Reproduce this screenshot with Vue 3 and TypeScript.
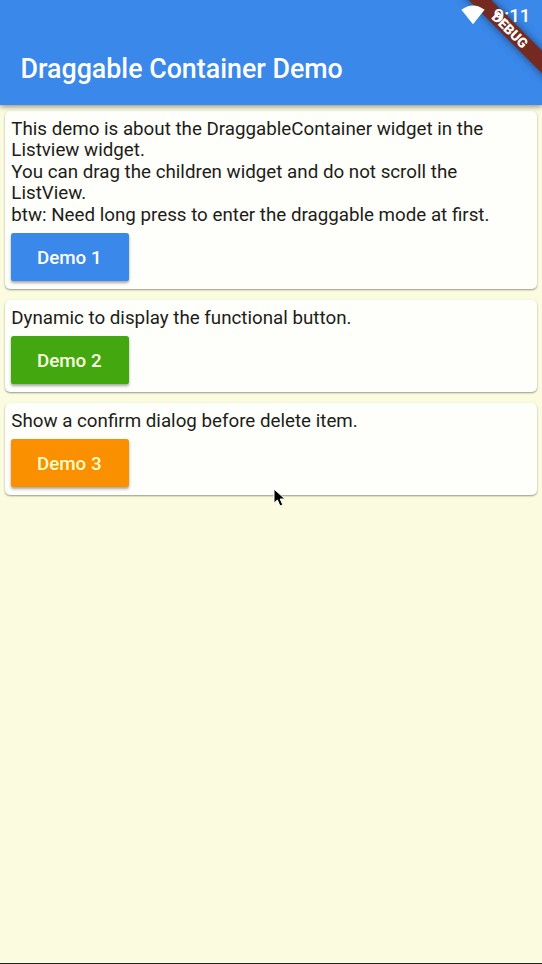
<script setup lang="ts">
interface Demo {
  lines: string[]
  label: string
  tone: string
}

const demos: Demo[] = [
  {
    lines: [
      'This demo is about the DraggableContainer widget in the Listview widget.',
      'You can drag the children widget and do not scroll the ListView.',
      'btw: Need long press to enter the draggable mode at first.',
    ],
    label: 'Demo 1',
    tone: 'blue',
  },
  { lines: ['Dynamic to display the functional button.'], label: 'Demo 2', tone: 'green' },
  { lines: ['Show a confirm dialog before delete item.'], label: 'Demo 3', tone: 'orange' },
]
</script>

<template>
  <div class="screen">
    <header class="app-bar">
      <h1>Draggable Container Demo</h1>
    </header>
    <main class="list">
      <section v-for="demo in demos" :key="demo.label" class="card">
        <p v-for="line in demo.lines" :key="line">{{ line }}</p>
        <button type="button" :class="demo.tone">{{ demo.label }}</button>
      </section>
    </main>
    <div class="ribbon-corner"><div class="ribbon">DEBUG</div></div>
    <div class="status">
      <svg class="wifi" width="24" height="20" viewBox="0 0 24 20">
        <path d="M0.4 4.8 Q12 -4 23.6 4.8 L12 19.2 Z" fill="#fff" />
      </svg>
      <span class="clock">9:11</span>
    </div>
    <svg class="cursor" width="14" height="20" viewBox="0 0 14 20">
      <path d="M1 1 V15.2 L4.4 12 L7 18 L9.8 16.8 L7.2 11 H12 Z" fill="#000" stroke="#fff" stroke-width="1" />
    </svg>
  </div>
</template>

<style>
body {
  margin: 0;
}
</style>

<style scoped>
.screen {
  position: relative;
  box-sizing: border-box;
  width: 542px;
  height: 964px;
  overflow: hidden;
  background: #fbfbe0;
  border-bottom: 1px solid #222;
  font-family: Roboto, sans-serif;
  color: #1d1d18;
}
.app-bar {
  position: relative;
  z-index: 1;
  box-sizing: border-box;
  height: 105px;
  padding: 54px 0 0 20.5px;
  background: #3a88ea;
  color: #fff;
  box-shadow: 0 2px 5px rgba(0, 0, 0, 0.4);
}
.status {
  position: absolute;
  z-index: 3;
  top: 0;
  right: 0;
  display: flex;
  align-items: center;
  gap: 9px;
  height: 31px;
  padding-right: 11.5px;
  color: #fff;
}
.wifi {
  margin-top: -2px;
}
.clock {
  font-size: 18.7px;
  font-weight: 500;
  line-height: 30px;
}
h1 {
  margin: 0;
  font-size: 26.8px;
  line-height: 31px;
  font-weight: 500;
}
.list {
  display: flex;
  flex-direction: column;
  gap: 10.5px;
  padding: 5.5px 5.3px;
}
.card {
  padding: 8px 6px;
  background: #fefefb;
  border-radius: 5px;
  box-shadow: 0 1px 2px rgba(0, 0, 0, 0.4);
}
p {
  margin: 0;
  font-size: 18.75px;
  line-height: 21.5px;
}
button {
  display: block;
  width: 118px;
  height: 48px;
  margin-top: 7px;
  padding: 1px 2px 0 0;
  border: 0;
  border-radius: 2.6px;
  color: #fff;
  font: 500 18.75px Roboto, sans-serif;
  box-shadow: 0 2px 3px rgba(0, 0, 0, 0.35);
}
.blue {
  background: #3a88ea;
}
.green {
  background: #43a80f;
  color: #fdfde4;
}
.orange {
  background: #fa8f00;
  color: #ffffc8;
}
.ribbon-corner {
  position: absolute;
  z-index: 2;
  top: 0;
  right: 0;
  width: 110px;
  height: 110px;
  overflow: hidden;
}
.ribbon {
  position: absolute;
  left: 3px;
  top: 21.5px;
  width: 150px;
  height: 16px;
  background: #742a20;
  color: #fff;
  font-size: 13.8px;
  font-weight: 900;
  line-height: 16px;
  text-align: center;
  transform: rotate(45deg);
  box-shadow: 0 0 8px rgba(0, 0, 0, 0.5);
}
.cursor {
  position: absolute;
  z-index: 3;
  left: 273px;
  top: 488px;
}
</style>
